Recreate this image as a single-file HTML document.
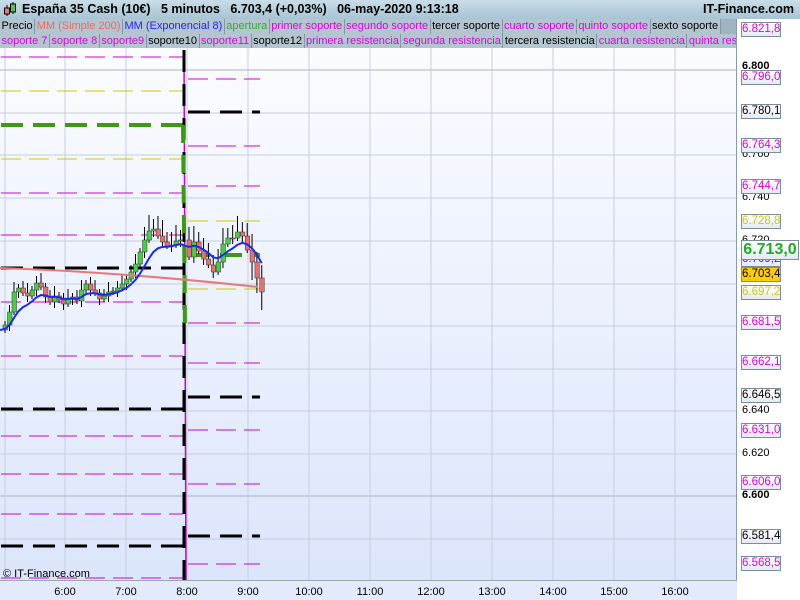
<!DOCTYPE html>
<html><head><meta charset="utf-8"><style>
*{margin:0;padding:0;box-sizing:border-box}
body{width:800px;height:600px;overflow:hidden;font-family:"Liberation Sans",sans-serif;background:#fff;position:relative}
#title{position:absolute;left:0;top:0;width:800px;height:19px;background:linear-gradient(#c9dde8,#a8c4d2);font-weight:bold;font-size:12.5px;color:#000;line-height:19px}
.row{position:absolute;left:0;height:15px;width:737px;background:#9fb4c0;white-space:nowrap;overflow:hidden;font-size:11px;line-height:14px}
.row span{display:inline-block;background:#b3c6d0;border-right:1px solid #7f98a6;padding:0 1.5px;height:15px}
#chart{position:absolute;left:0;top:48px;width:737px;height:532px;background:linear-gradient(#fbfcff,#dbe5fb);overflow:hidden}
#axis{position:absolute;left:736px;top:19px;width:64px;height:581px;background:#fff;border-left:1px solid #8a9aa6}
.lab{position:absolute;left:4px;width:40px;height:15px;border:1px solid #7a8e9a;background:linear-gradient(#fff,#e4eaf4);font-size:11.5px;line-height:13px;text-align:center}
.tick{position:absolute;left:5px;font-size:11px;color:#000}
#xaxis{position:absolute;left:0;top:580px;width:737px;height:20px;background:#e2eafb;border-top:1px solid #9aa}
.tl{position:absolute;top:5px;font-size:11px;width:40px;margin-left:-20px;text-align:center}
</style></head><body>
<div id="title"><svg style="position:absolute;left:3px;top:2px" width="14" height="15"><line x1="4" y1="3" x2="4" y2="14" stroke="#000"/><rect x="1.5" y="6" width="5" height="6" fill="#e77" stroke="#000"/><line x1="10" y1="0" x2="10" y2="12" stroke="#000"/><rect x="7.5" y="2" width="5" height="8" fill="#4c4" stroke="#000"/></svg><span style="position:absolute;left:22px">España 35 Cash (10€)&nbsp;&nbsp;&nbsp;5 minutos&nbsp;&nbsp;&nbsp;6.703,4 (+0,03%)&nbsp;&nbsp;&nbsp;06-may-2020 9:13:18</span><span style="position:absolute;right:6px">IT-Finance.com</span></div>
<div class="row" style="top:19px"><span>Precio</span><span style="color:#e66">MM (Simple 200)</span><span style="color:#22f">MM (Exponencial 8)</span><span style="color:#3a3">apertura</span><span style="color:#d0d">primer soporte</span><span style="color:#d0d">segundo soporte</span><span>tercer soporte</span><span style="color:#d0d">cuarto soporte</span><span style="color:#d0d">quinto soporte</span><span>sexto soporte</span></div>
<div class="row" style="top:34px;width:736px"><span style="color:#d0d">soporte 7</span><span style="color:#d0d">soporte 8</span><span style="color:#d0d">soporte9</span><span>soporte10</span><span style="color:#d0d">soporte11</span><span>soporte12</span><span style="color:#d0d">primera resistencia</span><span style="color:#d0d">segunda resistencia</span><span>tercera resistencia</span><span style="color:#d0d">cuarta resistencia</span><span style="color:#d0d">quinta resistencia</span></div>
<div id="chart"><svg id="sv" width="737" height="532" viewBox="0 48 737 532"></svg><div style="position:absolute;left:3px;top:520px;font-size:11px">© IT-Finance.com</div></div>
<div id="axis">
<div class="tick" style="top:41px;font-weight:bold">6.800</div>
<div class="tick" style="top:129px">6.760</div>
<div class="tick" style="top:172px">6.740</div>
<div class="tick" style="top:215px">6.720</div>
<div class="tick" style="top:385px">6.640</div>
<div class="tick" style="top:428px">6.620</div>
<div class="tick" style="top:470px;font-weight:bold">6.600</div>
<div class="lab" style="top:3px;color:#d0d">6.821,8</div>
<div class="lab" style="top:51px;color:#d0d">6.796,0</div>
<div class="lab" style="top:85px">6.780,1</div>
<div class="lab" style="top:119px;color:#d0d">6.764,3</div>
<div class="lab" style="top:160px;color:#d0d">6.744,7</div>
<div class="lab" style="top:195px;color:#cc0">6.728,8</div>
<div class="lab" style="top:233px;color:#22f">6.709,2</div>
<div class="lab" style="top:221px;left:4px;width:58px;height:20px;font-size:16px;line-height:18px;font-weight:bold;color:#2a2">6.713,0</div>
<div class="lab" style="top:248px;background:#fc0">6.703,4</div>
<div class="lab" style="top:266px;color:#cc0">6.697,2</div>
<div class="lab" style="top:296px;color:#d0d">6.681,5</div>
<div class="lab" style="top:336px;color:#d0d">6.662,1</div>
<div class="lab" style="top:369px">6.646,5</div>
<div class="lab" style="top:404px;color:#d0d">6.631,0</div>
<div class="lab" style="top:456px;color:#d0d">6.606,0</div>
<div class="lab" style="top:510px">6.581,4</div>
<div class="lab" style="top:537px;color:#d0d">6.568,5</div>
</div>
<div id="xaxis"></div>
<script>
var s='';
var gy=[70,113,155,198,241,284,326,369,411,454,496,539];
gy.forEach(function(y){s+='<line x1="0" x2="737" y1="'+y+'" y2="'+y+'" stroke="'+(y==70||y==496?'#a8b0c0':'#c6cede')+'"/>';});
var xs=[65,126,187,248,309,370,431,492,553,614,675];
var tl=['6:00','7:00','8:00','9:00','10:00','11:00','12:00','13:00','14:00','15:00','16:00'];
var xa='';
xs.forEach(function(x,i){s+='<line y1="48" y2="580" x1="'+x+'" x2="'+x+'" stroke="#c6cede"/>';xa+='<div class="tl" style="left:'+x+'px">'+tl[i]+'</div>';});
s+='<line y1="48" y2="580" x1="5" x2="5" stroke="#c6cede"/>';
document.getElementById('xaxis').innerHTML=xa;
var M='#d000d0',Y='#d0c800',K='#000',G='#3a9a10';
function dl(x1,x2,y,c,w,d){s+='<line x1="'+x1+'" x2="'+x2+'" y1="'+y+'" y2="'+y+'" stroke="'+c+'" stroke-width="'+w+'" stroke-dasharray="'+d+'"/>';}
var L=[[57,M,1],[91,Y,1],[125,G,4],[159,Y,1],[193,M,1],[235,M,1],[268,K,3],[302,M,1],[356,M,1],[409,K,3],[436,M,1],[474,M,1],[514,M,1],[546,K,3],[578,M,1]];
L.forEach(function(l){dl(1,183,l[0],l[1],l[2],l[2]>2?'22,10':'20,8');});
var R=[[79,M,1],[112,K,3],[146,M,1],[186,M,1],[221,Y,1],[255,G,4],[289,Y,1],[323,M,1],[363,M,1],[397,K,3],[430,M,1],[484,M,1],[536,K,3],[564,M,1]];
R.forEach(function(l){dl(188,260,l[0],l[1],l[2],l[2]>2?'22,10':'20,8');});
s+='<line x1="184" x2="186" y1="50" y2="580" stroke="'+M+'" stroke-width="1.5"/>';
s+='<line x1="184" x2="184" y1="50" y2="580" stroke="#000" stroke-width="3" stroke-dasharray="22,12"/>';
s+='<line x1="183" x2="185" y1="125" y2="330" stroke="'+G+'" stroke-width="4" stroke-dasharray="18,12"/>';
var c=[325,312,292,288,293,296,290,283,287,297,302,296,300,304,299,297,301,290,284,290,293,299,296,292,291,288,284,279,272,264,252,240,231,229,236,242,246,245,241,240,257,242,251,259,265,272,262,244,238,238,232,236,250,262,278,292];
var o=330,ema=o,pts=[];
for(var i=0;i<c.length;i++){var x=i<40?3+i*4.5:187+(i-40)*4.85;var cl=c[i];var up=cl<o;var t=Math.min(o,cl)-4-(i%3)*3,b=Math.max(o,cl)+3+(i%2)*3;if(i>30)t-=6;if(i>52)b+=12;
s+='<line x1="'+(x+2)+'" x2="'+(x+2)+'" y1="'+t+'" y2="'+b+'" stroke="#000"/>';
s+='<rect x="'+x+'" y="'+Math.min(o,cl)+'" width="4.5" height="'+Math.max(1,Math.abs(o-cl))+'" fill="'+(up?'#44d040':'#e87070')+'" stroke="#333" stroke-width="0.5"/>';
ema=ema+(cl-ema)*2/9;pts.push((x+2)+','+ema.toFixed(1));o=cl;}
s+='<path d="M0,268 Q120,272 258,287" fill="none" stroke="#e67a7a" stroke-width="2"/>';
s+='<polyline points="0,330 '+pts.join(' ')+'" fill="none" stroke="#1a2af0" stroke-width="2"/>';
document.getElementById('sv').innerHTML=s;
</script>
</body></html>
